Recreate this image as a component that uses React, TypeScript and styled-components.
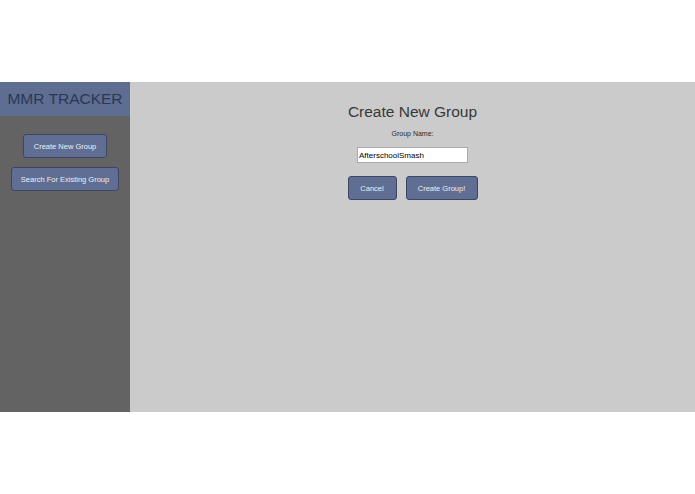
import styled, {createGlobalStyle} from 'styled-components';

const GlobalStyle = createGlobalStyle`
  html, body {
    margin: 0;
    padding: 0;
    background: #ffffff;
    font-family: "Liberation Sans", Arial, sans-serif;
  }
`;

const Page = styled.div`
  height: 100vh;
  display: flex;
  align-items: center;
`;

const Layout = styled.div`
  width: 100%;
  height: 330px;
  display: flex;
`;

const Sidebar = styled.aside`
  width: 130px;
  flex-shrink: 0;
  background: #636363;
  display: flex;
  flex-direction: column;
  align-items: center;
`;

const Brand = styled.div`
  align-self: stretch;
  height: 34px;
  background: #5e6d92;
  color: #2c3754;
  font-size: 15.5px;
  display: flex;
  align-items: center;
  justify-content: center;
`;

const NavList = styled.nav`
  display: flex;
  flex-direction: column;
  align-items: center;
  gap: 9px;
  margin-top: 18px;
`;

const Button = styled.button<{$width: number}>`
  width: ${(p) => p.$width}px;
  height: 24px;
  padding: 0;
  background: #5f6e92;
  border: 1px solid #3b4664;
  border-radius: 3px;
  color: #eceef4;
  font-family: "Liberation Sans", Arial, sans-serif;
  font-size: 7.5px;
  cursor: pointer;
`;

const Main = styled.main`
  flex: 1;
  background: #cbcbcb;
  display: flex;
  flex-direction: column;
  align-items: center;
  padding-top: 21px;
`;

const Title = styled.h1`
  margin: 0;
  font-size: 15.5px;
  font-weight: normal;
  color: #383838;
  line-height: 18px;
`;

const Label = styled.label`
  margin-top: 9px;
  font-size: 7px;
  color: #2a2a2a;
`;

const NameInput = styled.input`
  box-sizing: border-box;
  margin-top: 10px;
  width: 111px;
  height: 16px;
  padding: 0 1px;
  border: 1px solid #a9a9a9;
  background: #fff;
  font-family: "Liberation Sans", Arial, sans-serif;
  font-size: 8px;
  color: #000;
  outline: none;
`;

const Actions = styled.div`
  display: flex;
  gap: 9px;
  margin-top: 13px;
`;

export default function App() {
  return (
    <>
      <GlobalStyle />
      <Page>
        <Layout>
          <Sidebar>
            <Brand>MMR TRACKER</Brand>
            <NavList>
              <Button $width={84}>Create New Group</Button>
              <Button $width={108}>Search For Existing Group</Button>
            </NavList>
          </Sidebar>
          <Main>
            <Title>Create New Group</Title>
            <Label htmlFor="group-name">Group Name:</Label>
            <NameInput id="group-name" defaultValue="AfterschoolSmash" />
            <Actions>
              <Button $width={49}>Cancel</Button>
              <Button $width={72}>Create Group!</Button>
            </Actions>
          </Main>
        </Layout>
      </Page>
    </>
  );
}
